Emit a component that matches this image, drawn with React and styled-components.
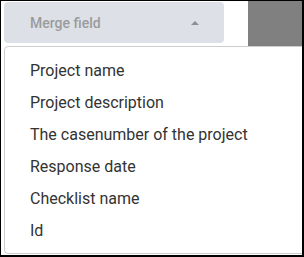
import React from "react";
import styled, { createGlobalStyle } from "styled-components";

const Global = createGlobalStyle`
  html, body { margin: 0; padding: 0; background: #ffffff; }
  body { font-family: Roboto, "Liberation Sans", sans-serif; }
`;

const Frame = styled.div`
  box-sizing: border-box;
  width: 304px;
  height: 257px;
  border-style: solid;
  border-color: #000;
  border-width: 1px 2px 2px 1px;
  background: #fff;
  display: flex;
  flex-direction: column;
  overflow: hidden;
`;

const TopRow = styled.div`
  display: flex;
  height: 45px;
  flex-shrink: 0;
`;

const SelectButton = styled.button`
  box-sizing: border-box;
  margin: 1px 0 0 3px;
  width: 220px;
  height: 41px;
  border: none;
  border-radius: 4px;
  background: #dde1e7;
  display: flex;
  align-items: center;
  justify-content: space-between;
  padding: 1px 25px 0 26px;
  font-family: Roboto, "Liberation Sans", sans-serif;
  font-size: 14px;
  font-weight: 500;
  color: #9b9b9b;
  cursor: pointer;
`;

const Caret = styled.span`
  width: 0;
  height: 0;
  border-left: 4px solid transparent;
  border-right: 4px solid transparent;
  border-bottom: 4px solid #8f8f8f;
  margin-top: 0;
`;

const Shade = styled.div`
  margin-left: auto;
  width: 54px;
  height: 45px;
  background: #808080;
`;

const Menu = styled.ul`
  box-sizing: border-box;
  list-style: none;
  margin: 0 -4px 0 3px;
  padding: 7px 0;
  height: 208px;
  border: 1px solid #cdcdcd;
  border-radius: 4px;
  background: #fff;
`;

const Item = styled.li`
  height: 32px;
  display: flex;
  align-items: center;
  padding-left: 25px;
  font-size: 16px;
  color: #333333;
  white-space: nowrap;
`;

const items = [
  "Project name",
  "Project description",
  "The casenumber of the project",
  "Response date",
  "Checklist name",
  "Id",
];

export default function App() {
  return (
    <>
      <Global />
      <Frame>
        <TopRow>
          <SelectButton>
            <span>Merge field</span>
            <Caret />
          </SelectButton>
          <Shade />
        </TopRow>
        <Menu>
          {items.map((t) => (
            <Item key={t}>{t}</Item>
          ))}
        </Menu>
      </Frame>
    </>
  );
}
